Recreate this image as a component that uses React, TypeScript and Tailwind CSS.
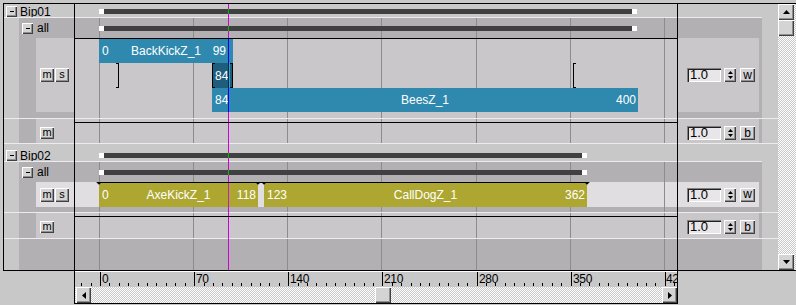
import React from "react";

const RAISED =
  "bg-[#d4d4d4] shadow-[inset_1px_1px_0_#ffffff,inset_-1px_-1px_0_#404040,inset_-2px_-2px_0_#909090]";
const CHECK =
  "bg-[image:repeating-conic-gradient(#c8c8c8_0%_25%,#ffffff_0%_50%)] bg-[length:2px_2px]";
const GRID = [24, 118, 212, 306, 401, 495, 589];

function Btn({ className = "", children }: { className?: string; children?: React.ReactNode }) {
  return (
    <div className={`flex items-center justify-center text-black leading-none shrink-0 ${RAISED} ${className}`}>
      {children}
    </div>
  );
}

function Track({
  className = "",
  grid = true,
  children,
}: {
  className?: string;
  grid?: boolean;
  children?: React.ReactNode;
}) {
  return (
    <div className={`relative w-[603px] shrink-0 border-r border-black overflow-hidden ${className}`}>
      {grid &&
        GRID.map((x) => (
          <div key={x} className="absolute top-0 bottom-0 w-px bg-[#8c8c8c]" style={{ left: x }} />
        ))}
      <div className="absolute top-0 bottom-0 left-[153px] w-px bg-[#d000d8]" />
      {children}
    </div>
  );
}

function Bar({ className = "", width }: { className?: string; width: number }) {
  return (
    <div className={`absolute left-[24px] h-[5px] flex ${className}`} style={{ width }}>
      <div className="w-[5px] h-full bg-white" />
      <div className="flex-1 h-full bg-[#404040] relative">
        <div className="absolute top-0 bottom-0 left-[124px] w-px bg-[#00c000]" />
      </div>
      <div className="w-[5px] h-full bg-white" />
    </div>
  );
}

function Clip({
  left,
  width,
  className = "",
  a,
  name,
  b,
  bPad = "pr-[2px]",
  ph,
  phColor = "bg-[#0000ff]",
}: {
  left: number;
  width: number;
  className?: string;
  a: string;
  name: string;
  b: string;
  bPad?: string;
  ph?: number;
  phColor?: string;
}) {
  return (
    <div
      className={`absolute grid grid-cols-[1fr_auto_1fr] items-center text-white text-[12px] leading-none ${className}`}
      style={{ left, width }}
    >
      <span className="justify-self-start pl-[3px]">{a}</span>
      <span>{name}</span>
      <span className={`justify-self-end ${bPad}`}>{b}</span>
      {ph !== undefined && <div className={`absolute top-0 bottom-0 w-px ${phColor}`} style={{ left: ph }} />}
    </div>
  );
}

function Spinner({ letter }: { letter: string }) {
  return (
    <div className="flex items-center">
      <div className="w-[34px] h-[14px] bg-[#e8e6e8] shadow-[inset_1px_1px_0_#808080,inset_2px_2px_0_#202020,inset_-1px_-1px_0_#ffffff] text-[13px] leading-[14px] pl-[3px] text-black">
        1.0
      </div>
      <div className={`ml-[3px] w-[12px] h-[14px] flex flex-col items-center justify-center gap-[2px] ${RAISED}`}>
        <svg width="5" height="3" viewBox="0 0 5 3">
          <polygon points="2.5,0 5,3 0,3" fill="#000" />
        </svg>
        <svg width="5" height="3" viewBox="0 0 5 3">
          <polygon points="0,0 5,0 2.5,3" fill="#000" />
        </svg>
      </div>
      <Btn className="ml-[4px] w-[15px] h-[14px] text-[12px] pb-[1px]">{letter}</Btn>
    </div>
  );
}

function WhiteLine({ rightFull = false }: { rightFull?: boolean }) {
  return (
    <div className="flex h-px shrink-0">
      <div className="w-[71px] border-r border-black bg-[#ececec]" />
      <Track grid={false} className="bg-[#ececec]" />
      {rightFull ? (
        <div className="w-[100px] bg-[#ececec]" />
      ) : (
        <>
          <div className="w-[84px] bg-[#ececec]" />
          <div className="w-[16px] bg-[#c8c8c8]" />
        </>
      )}
    </div>
  );
}

function Minus() {
  return <div className="w-[4px] h-px bg-black" />;
}

function GroupHeader({ label, barWidth, h, barTop }: { label: string; barWidth: number; h: string; barTop: string }) {
  return (
    <div className={`flex shrink-0 ${h}`}>
      <div className="w-[71px] border-r border-black bg-[#c8c8c8] flex items-end pl-[2px]">
        <div className="flex items-center h-[11px] gap-[3px] text-[12px] text-black">
          <Btn className="w-[11px] h-[11px]">
            <Minus />
          </Btn>
          <span>{label}</span>
        </div>
      </div>
      <Track grid={false} className="bg-[#c8c8c8]">
        <Bar className={barTop} width={barWidth} />
      </Track>
      <div className="w-[100px] bg-[#c8c8c8]" />
    </div>
  );
}

function AllRow({ barWidth }: { barWidth: number }) {
  return (
    <div className="flex h-[20px] shrink-0">
      <div className="w-[71px] border-r border-black flex">
        <div className="w-[15px] bg-[#c8c8c8]" />
        <div className="flex-1 bg-[#b2b0b2] flex items-center pl-[3px] gap-[4px] text-[12px] text-black">
          <Btn className="w-[11px] h-[11px]">
            <Minus />
          </Btn>
          <span>all</span>
        </div>
      </div>
      <Track className="bg-[#b2b0b2]">
        <Bar className="top-[8px]" width={barWidth} />
      </Track>
      <div className="w-[84px] bg-[#b2b0b2]" />
      <div className="w-[16px] bg-[#c8c8c8]" />
    </div>
  );
}

function PadRow({ h, track }: { h: string; track: string }) {
  return (
    <div className={`flex shrink-0 ${h}`}>
      <div className="w-[71px] border-r border-black flex">
        <div className="w-[15px] bg-[#c8c8c8]" />
        <div className="flex-1 bg-[#b2b0b2]" />
      </div>
      <Track className={track} />
      <div className="w-[84px] bg-[#b2b0b2]" />
      <div className="w-[16px] bg-[#c8c8c8]" />
    </div>
  );
}

function MRow({ h }: { h: string }) {
  return (
    <div className={`flex shrink-0 ${h}`}>
      <div className="w-[71px] border-r border-black flex">
        <div className="w-[15px] bg-[#c8c8c8]" />
        <div className="w-[17px] bg-[#b2b0b2]" />
        <div className="flex-1 bg-[#c9c7c9] pl-[4px] pt-[8px]">
          <Btn className="w-[14px] h-[12px] text-[11px] pb-[1px]">m</Btn>
        </div>
      </div>
      <Track className="bg-[#c9c7c9]">
        <div className="absolute left-0 right-0 top-[3px] h-px bg-black" />
      </Track>
      <div className="w-[81px] bg-[#c9c7c9] pl-[9px] pt-[7px]">
        <Spinner letter="b" />
      </div>
      <div className="w-[3px] bg-[#b2b0b2]" />
      <div className="w-[16px] bg-[#c8c8c8]" />
    </div>
  );
}

function Bracket({ left, side }: { left: number; side: "l" | "r" }) {
  return (
    <div
      className={`absolute top-[24px] h-[25px] w-[3px] border-black border-t border-b ${
        side === "l" ? "border-l" : "border-r"
      }`}
      style={{ left: side === "l" ? left : left - 2 }}
    />
  );
}

function Diamond({ x }: { x: number }) {
  return (
    <div className="absolute top-[-2px] w-[4px] h-[4px] bg-black rotate-45" style={{ left: x - 2 }} />
  );
}

function ScrollArrow({ dir }: { dir: "up" | "down" | "left" | "right" }) {
  const pts =
    dir === "up"
      ? "3.5,0 7,4 0,4"
      : dir === "down"
      ? "0,0 7,0 3.5,4"
      : dir === "left"
      ? "4,0 4,7 0,3.5"
      : "0,0 0,7 4,3.5";
  const vertical = dir === "up" || dir === "down";
  return (
    <svg width={vertical ? 7 : 4} height={vertical ? 4 : 7} viewBox={vertical ? "0 0 7 4" : "0 0 4 7"}>
      <polygon points={pts} fill="#000" />
    </svg>
  );
}

const TICKS = [25, 119, 213, 307, 402, 496, 590];
const LABELS = ["0", "70", "140", "210", "280", "350", "42"];

function Ruler() {
  const minors: number[] = [];
  for (let k = -2; k < 66; k++) {
    if (k % 10 === 0) continue;
    const x = Math.round(25 + 9.413 * k);
    if (x >= 0 && x < 602) minors.push(x);
  }
  return (
    <div className="relative h-[15px] bg-[#c8c8c8] overflow-hidden">
      <svg className="absolute left-0 top-0" width="602" height="15" shapeRendering="crispEdges">
        {TICKS.map((x) => (
          <rect key={x} x={x} y={0} width={1} height={14} fill="#000" />
        ))}
        {minors.map((x) => (
          <rect key={x} x={x} y={11} width={1} height={3} fill="#000" />
        ))}
      </svg>
      {TICKS.map((x, i) => (
        <span
          key={x}
          className="absolute top-[1px] text-[12px] leading-[12px] tracking-[-0.3px] text-black"
          style={{ left: i === TICKS.length - 1 ? x + 1 : x + 2 }}
        >
          {LABELS[i]}
        </span>
      ))}
    </div>
  );
}

export default function App() {
  return (
    <div className="w-[796px] h-[305px] bg-[#c8c8c8] overflow-hidden font-['Liberation_Sans',Arial,sans-serif] select-none">
      <div className="pt-[3px] pl-[3px]">
        <div className="w-[795px] h-[268px] border border-black flex">
          <div className="w-[774px] flex flex-col shrink-0">
            {/* Bip01 */}
            <GroupHeader label="Bip01" barWidth={538} h="h-[13px]" barTop="top-[5px]" />
            <WhiteLine />
            <AllRow barWidth={538} />
            {/* track row 1 */}
            <div className="flex h-[74px] shrink-0">
              <div className="w-[71px] border-r border-black flex">
                <div className="w-[15px] bg-[#c8c8c8]" />
                <div className="w-[17px] bg-[#b2b0b2]" />
                <div className="flex-1 bg-[#c9c7c9] flex items-center pl-[4px] gap-[1px]">
                  <Btn className="w-[14px] h-[14px] text-[11px] pb-[1px]">m</Btn>
                  <Btn className="w-[14px] h-[14px] text-[11px] pb-[1px]">s</Btn>
                </div>
              </div>
              <Track className="bg-[#c9c7c9] border-t">
                <Clip
                  left={24}
                  width={134}
                  className="top-0 h-[24px] bg-[#2f89ae]"
                  a="0"
                  name="BackKickZ_1"
                  b="99"
                  bPad="pr-[7px]"
                  ph={129}
                />
                <div className="absolute left-[137px] top-[24px] w-[21px] h-[25px] bg-[#1e5e7c] text-white text-[12px] leading-none flex items-center pl-[3px]">
                  84
                  <div className="absolute top-0 bottom-0 left-[16px] w-px bg-[#0000ff]" />
                  <div className="absolute top-0 bottom-0 left-[17px] w-px bg-[#20d020]" />
                </div>
                <Bracket left={137} side="l" />
                <Bracket left={157} side="r" />
                <Bracket left={43} side="r" />
                <Bracket left={498} side="l" />
                <Clip
                  left={137}
                  width={426}
                  className="top-[49px] h-[24px] bg-[#2f89ae]"
                  a="84"
                  name="BeesZ_1"
                  b="400"
                  ph={16}
                />
              </Track>
              <div className="w-[81px] bg-[#c9c7c9] flex items-center pl-[9px]">
                <Spinner letter="w" />
              </div>
              <div className="w-[3px] bg-[#b2b0b2]" />
              <div className="w-[16px] bg-[#c8c8c8]" />
            </div>
            <PadRow h="h-[6px]" track="bg-[#c9c7c9]" />
            <WhiteLine rightFull />
            <MRow h="h-[24px]" />
            <WhiteLine rightFull />
            {/* Bip02 */}
            <GroupHeader label="Bip02" barWidth={488} h="h-[17px]" barTop="top-[9px]" />
            <WhiteLine />
            <AllRow barWidth={488} />
            {/* track row 2 */}
            <div className="flex h-[25px] shrink-0">
              <div className="w-[71px] border-r border-black flex">
                <div className="w-[15px] bg-[#c8c8c8]" />
                <div className="w-[17px] bg-[#b2b0b2]" />
                <div className="flex-1 bg-[#e0dee0] flex items-center pl-[4px] gap-[1px]">
                  <Btn className="w-[14px] h-[14px] text-[11px] pb-[1px]">m</Btn>
                  <Btn className="w-[14px] h-[14px] text-[11px] pb-[1px]">s</Btn>
                </div>
              </div>
              <Track className="bg-[#e0dee0]">
                <div className="absolute left-[24px] w-[488px] top-0 h-px bg-black" />
                <Clip
                  left={24}
                  width={159}
                  className="top-[1px] h-[24px] bg-[#ada732]"
                  a="0"
                  name="AxeKickZ_1"
                  b="118"
                  ph={129}
                  phColor="bg-[#c020c0]"
                />
                <Clip
                  left={189}
                  width={323}
                  className="top-[1px] h-[24px] bg-[#ada732]"
                  a="123"
                  name="CallDogZ_1"
                  b="362"
                />
                <div className="absolute left-0 right-0 top-0 h-0">
                  <Diamond x={24} />
                  <Diamond x={183} />
                  <Diamond x={189} />
                  <Diamond x={512} />
                </div>
              </Track>
              <div className="w-[81px] bg-[#e0dee0] flex items-center pl-[9px]">
                <Spinner letter="w" />
              </div>
              <div className="w-[3px] bg-[#b2b0b2]" />
              <div className="w-[16px] bg-[#c8c8c8]" />
            </div>
            <PadRow h="h-[5px]" track="bg-[#b2b0b2]" />
            <WhiteLine rightFull />
            <MRow h="h-[25px]" />
            <WhiteLine rightFull />
            <PadRow h="h-[31px]" track="bg-[#b2b0b2]" />
          </div>
          {/* vertical scrollbar */}
          <div className={`flex-1 flex flex-col ${CHECK}`}>
            <Btn className="w-[16px] h-[16px]">
              <ScrollArrow dir="up" />
            </Btn>
            <Btn className="w-[16px] h-[16px]" />
            <div className="flex-1" />
            <Btn className="w-[16px] h-[16px]">
              <ScrollArrow dir="down" />
            </Btn>
          </div>
        </div>
      </div>
      {/* ruler + horizontal scrollbar */}
      <div className="flex h-[34px]">
        <div className="w-[74px] shrink-0" />
        <div className="w-[604px] h-[33px] shrink-0 border-l border-r border-b border-black flex flex-col">
          <div className="h-px bg-white" />
          <Ruler />
          <div className={`h-[16px] flex pl-[1px] ${CHECK}`}>
            <Btn className="w-[15px] h-[16px]">
              <ScrollArrow dir="left" />
            </Btn>
            <div className="w-[284px]" />
            <Btn className="w-[16px] h-[16px]" />
            <div className="w-[271px]" />
            <Btn className="w-[15px] h-[16px]">
              <ScrollArrow dir="right" />
            </Btn>
          </div>
        </div>
      </div>
    </div>
  );
}
